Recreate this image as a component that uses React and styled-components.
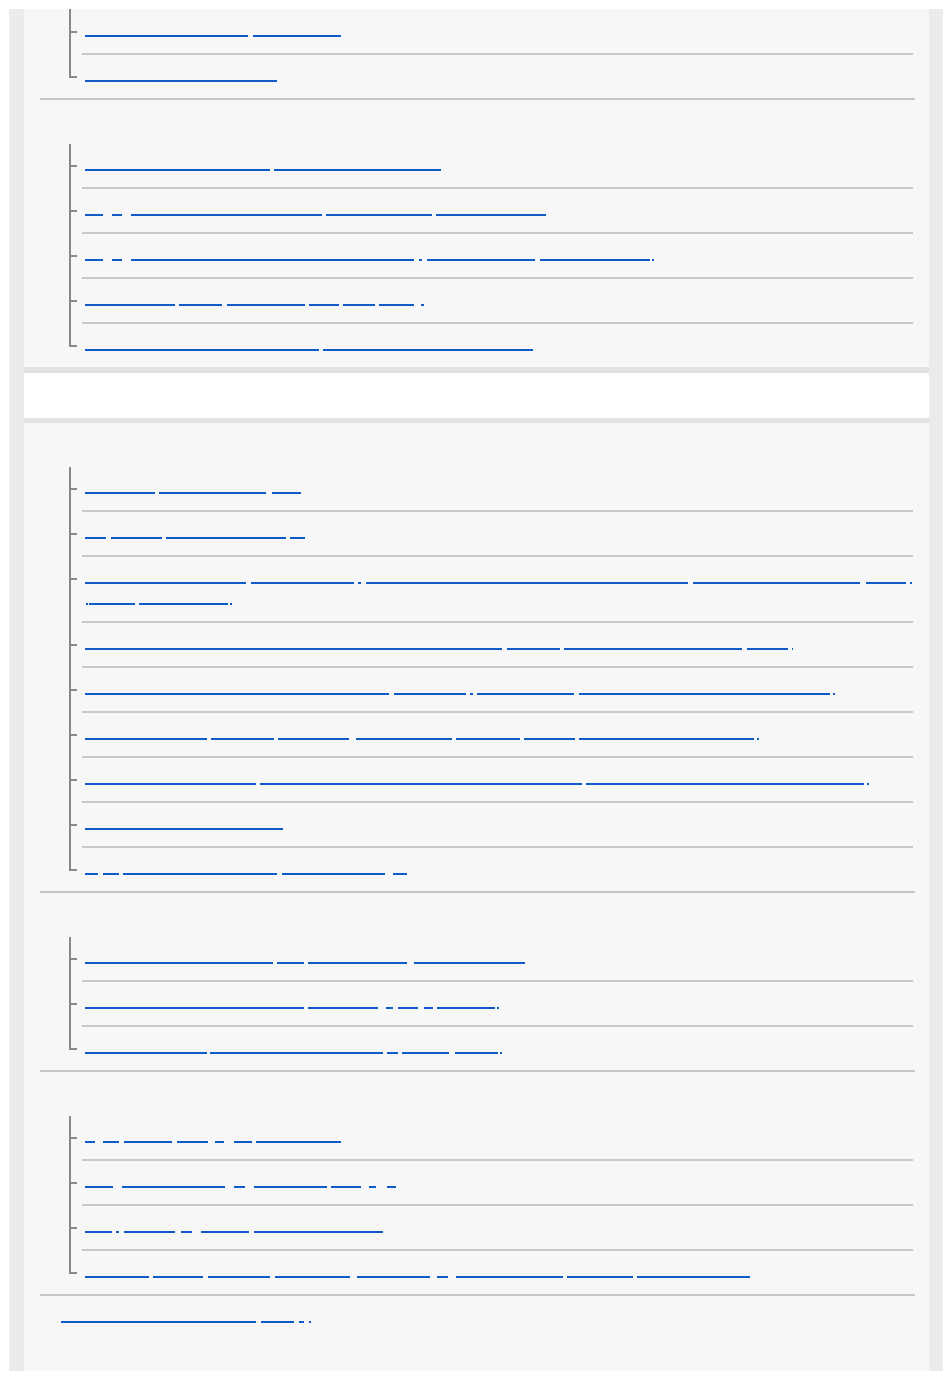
import React from 'react';
import styled, { createGlobalStyle } from 'styled-components';

const Global = createGlobalStyle`
  html, body { margin: 0; padding: 0; background: #ffffff; }
  body { font-family: "Liberation Sans", Arial, sans-serif; font-size: 15px; }
  * { box-sizing: border-box; }
`;

const Frame = styled.div`
  margin: 9px 7px 8px 9px;
  height: 1362px;
  background: #ebebeb;
  padding: 0 14px 0 15px;
  overflow: hidden;
`;

const Content = styled.main`
  background: #f7f7f7;
  height: 100%;
`;

const Group = styled.div``;

const Section = styled.section`
  margin: 0 14px 0 16px;
  padding-top: ${p => (p.$top ?? 44)}px;
  border-bottom: ${p => (p.$ruled ? '2px solid #c6c6c6' : 'none')};
`;

const Band = styled.div`
  height: 56px;
  background: #ffffff;
  border-top: 6px solid #e2e2e2;
  border-bottom: 5px solid #e2e2e2;
`;

const Tree = styled.ul`
  list-style: none;
  margin: 0 2px 0 29px;
  padding: ${p => (p.$continued ? '1px 0 0' : '0')};
  ${p => p.$continued && `& > li:first-child::before { top: -1px; }`}
`;

const Item = styled.li`
  position: relative;
  padding-left: 13px;
  &::before {
    content: '';
    position: absolute;
    left: 0;
    top: 0;
    bottom: 0;
    width: 2px;
    background: #898989;
  }
  &:last-child::before {
    bottom: auto;
    height: 23px;
  }
  &::after {
    content: '';
    position: absolute;
    left: 2px;
    top: 21px;
    width: 6px;
    height: 2px;
    background: #898989;
  }
`;

const Row = styled.div`
  padding: 11px 0 11px 3px;
  border-bottom: 2px solid #c9c9c9;
  ${Item}:last-child > & {
    border-bottom: none;
  }
`;

const Line = styled.div`
  height: 21px;
  display: flex;
  align-items: center;
`;

const Seg = styled.a`
  display: block;
  flex: none;
  height: 11px;
  border-bottom: 2px solid #0f5cc9;
`;

const Footer = styled.section`
  margin: 0 14px 0 16px;
  padding: 11px 0 42px 21px;
`;

function Segments({ segs, base }) {
  let prev = base;
  return (
    <Line>
      {segs.map(([a, b], i) => {
        const ml = a - prev;
        prev = b;
        return <Seg key={i} href="#" aria-label="link" style={{ marginLeft: ml, width: b - a }} />;
      })}
    </Line>
  );
}

function List({ items, continued }) {
  return (
    <Tree $continued={continued}>
      {items.map((lines, i) => (
        <Item key={i}>
          <Row>
            {lines.map((segs, j) => (
              <Segments key={j} segs={segs} base={85} />
            ))}
          </Row>
        </Item>
      ))}
    </Tree>
  );
}

const secA = [
  [[[85, 248], [253, 341]]],
  [[[85, 277]]],
];

const secB = [
  [[[85, 270], [274, 441]]],
  [[[85, 103], [112, 122], [131, 322], [326, 432], [436, 546]]],
  [[[85, 103], [112, 122], [131, 414], [419, 422], [427, 535], [540, 650], [652, 654]]],
  [[[85, 175], [179, 222], [227, 305], [309, 339], [343, 375], [379, 414], [421, 424]]],
  [[[85, 319], [323, 533]]],
];

const secC = [
  [[[85, 155], [159, 266], [272, 301]]],
  [[[85, 106], [111, 162], [166, 286], [290, 305]]],
  [
    [[85, 246], [251, 354], [358, 361], [366, 688], [693, 860], [866, 906], [910, 912]],
    [[86, 88], [89, 135], [139, 228], [230, 232]],
  ],
  [[[85, 502], [507, 560], [564, 742], [747, 788], [792, 793]]],
  [[[85, 389], [394, 466], [470, 473], [477, 574], [579, 830], [833, 835]]],
  [[[85, 207], [211, 274], [278, 349], [356, 452], [456, 520], [524, 575], [579, 754], [757, 759]]],
  [[[85, 256], [260, 582], [586, 864], [867, 869]]],
  [[[85, 283]]],
  [[[85, 98], [103, 119], [123, 277], [282, 385], [393, 407]]],
];

const secD = [
  [[[85, 273], [277, 304], [308, 407], [414, 525]]],
  [[[85, 304], [308, 378], [386, 393], [398, 418], [424, 433], [437, 495], [497, 499]]],
  [[[85, 207], [210, 383], [387, 398], [402, 449], [455, 498], [500, 502]]],
];

const secE = [
  [[[85, 95], [103, 119], [124, 172], [177, 208], [215, 224], [234, 252], [256, 341]]],
  [[[85, 113], [122, 225], [234, 245], [254, 327], [331, 361], [369, 376], [387, 396]]],
  [[[85, 112], [116, 119], [124, 175], [181, 192], [201, 249], [254, 383]]],
  [[[85, 149], [153, 203], [208, 270], [275, 350], [357, 430], [437, 448], [456, 563], [567, 633], [637, 750]]],
];

const footer = [[61, 256], [261, 294], [299, 304], [309, 311]];

export default function App() {
  return (
    <>
      <Global />
      <Frame>
        <Content>
          <Group>
            <Section $top={0} $ruled>
              <List items={secA} continued />
            </Section>
            <Section>
              <List items={secB} />
            </Section>
          </Group>
          <Band />
          <Group>
            <Section $ruled>
              <List items={secC} />
            </Section>
            <Section $ruled>
              <List items={secD} />
            </Section>
            <Section $ruled>
              <List items={secE} />
            </Section>
            <Footer>
              <Segments segs={footer} base={61} />
            </Footer>
          </Group>
        </Content>
      </Frame>
    </>
  );
}
